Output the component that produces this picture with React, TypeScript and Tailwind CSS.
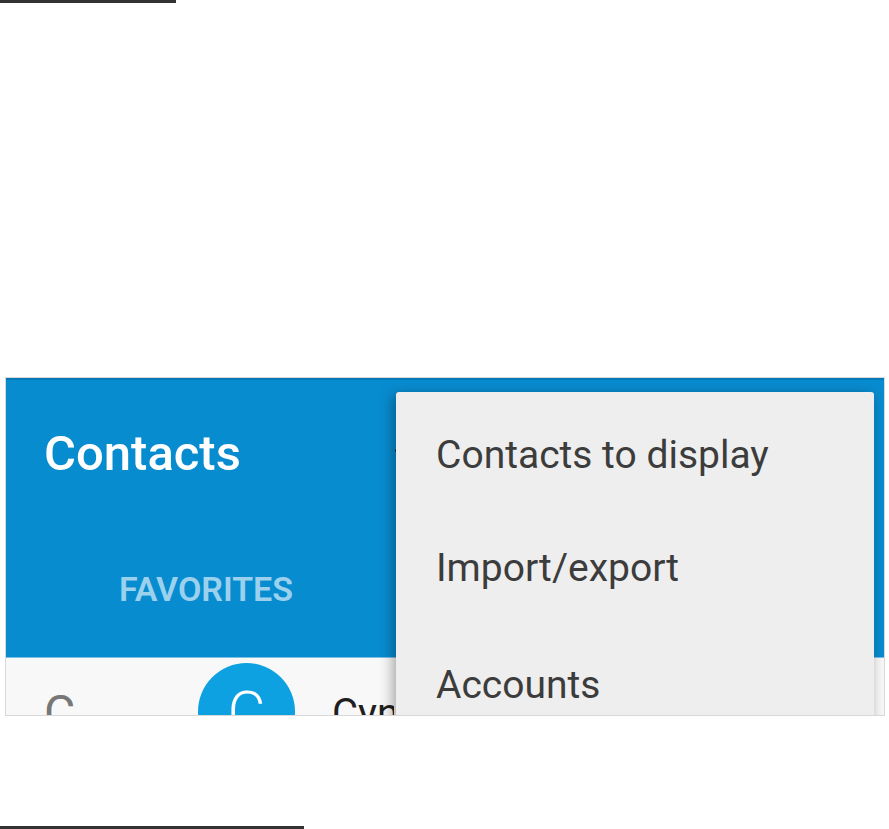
export default function App() {
  const menu = [
    { label: "Contacts to display", mt: "mt-[44px]" },
    { label: "Import/export", mt: "mt-[74px]" },
    { label: "Accounts", mt: "mt-[78px]" },
  ];

  return (
    <div className="w-[889px] h-[829px] bg-white overflow-hidden font-['Roboto',sans-serif]">
      <div className="w-[176px] h-[3px] bg-[#333333]" />

      {/* device screenshot */}
      <div className="ml-[5px] mt-[374px] w-[880px] h-[339px] border border-[#d8d8d8] relative overflow-hidden">
        <div className="h-[279px] bg-[#088cd0] border-t-2 border-[#0679b8]">
          <div className="pl-[38px] pt-[49px] text-[49px] leading-none font-medium text-white">
            Contacts
          </div>
          <div className="pl-[113px] mt-[94px] text-[34px] leading-none font-semibold text-[#9cd1ee]">
            FAVORITES
          </div>
        </div>

        {/* first contact row */}
        <div className="h-[60px] bg-[#f8f8f8] border-t border-[#7cc0e6] flex items-start">
          <div className="ml-[38px] mt-[31px] w-[60px] text-[48px] leading-none text-[#777777]">
            C
          </div>
          <div className="ml-[94px] mt-[5px] w-[97px] h-[97px] shrink-0 rounded-full bg-[#0ea1e2] flex items-center justify-center text-[58px] leading-none font-light text-white">
            C
          </div>
          <div className="ml-[37px] mt-[36px] w-[62px] overflow-hidden whitespace-nowrap text-[40px] leading-none text-[#1f1f1f]">
            Cynthia
          </div>
        </div>

        <div className="absolute left-[389px] top-[71px] w-[3px] h-[3px] rounded-full bg-[#1a1a1a]" />

        {/* overflow menu */}
        <div className="absolute left-[390px] top-[14px] w-[478px] h-[360px] bg-[#eeeeee] rounded-[3px] shadow-[-3px_3px_14px_rgba(0,0,0,0.35)]">
          {menu.map((m) => (
            <div
              key={m.label}
              className={`${m.mt} pl-[40px] text-[39px] leading-none text-[#3c3c3c]`}
            >
              {m.label}
            </div>
          ))}
        </div>
      </div>

      <div className="mt-[110px] w-[304px] h-[3px] bg-[#333333]" />
    </div>
  );
}
